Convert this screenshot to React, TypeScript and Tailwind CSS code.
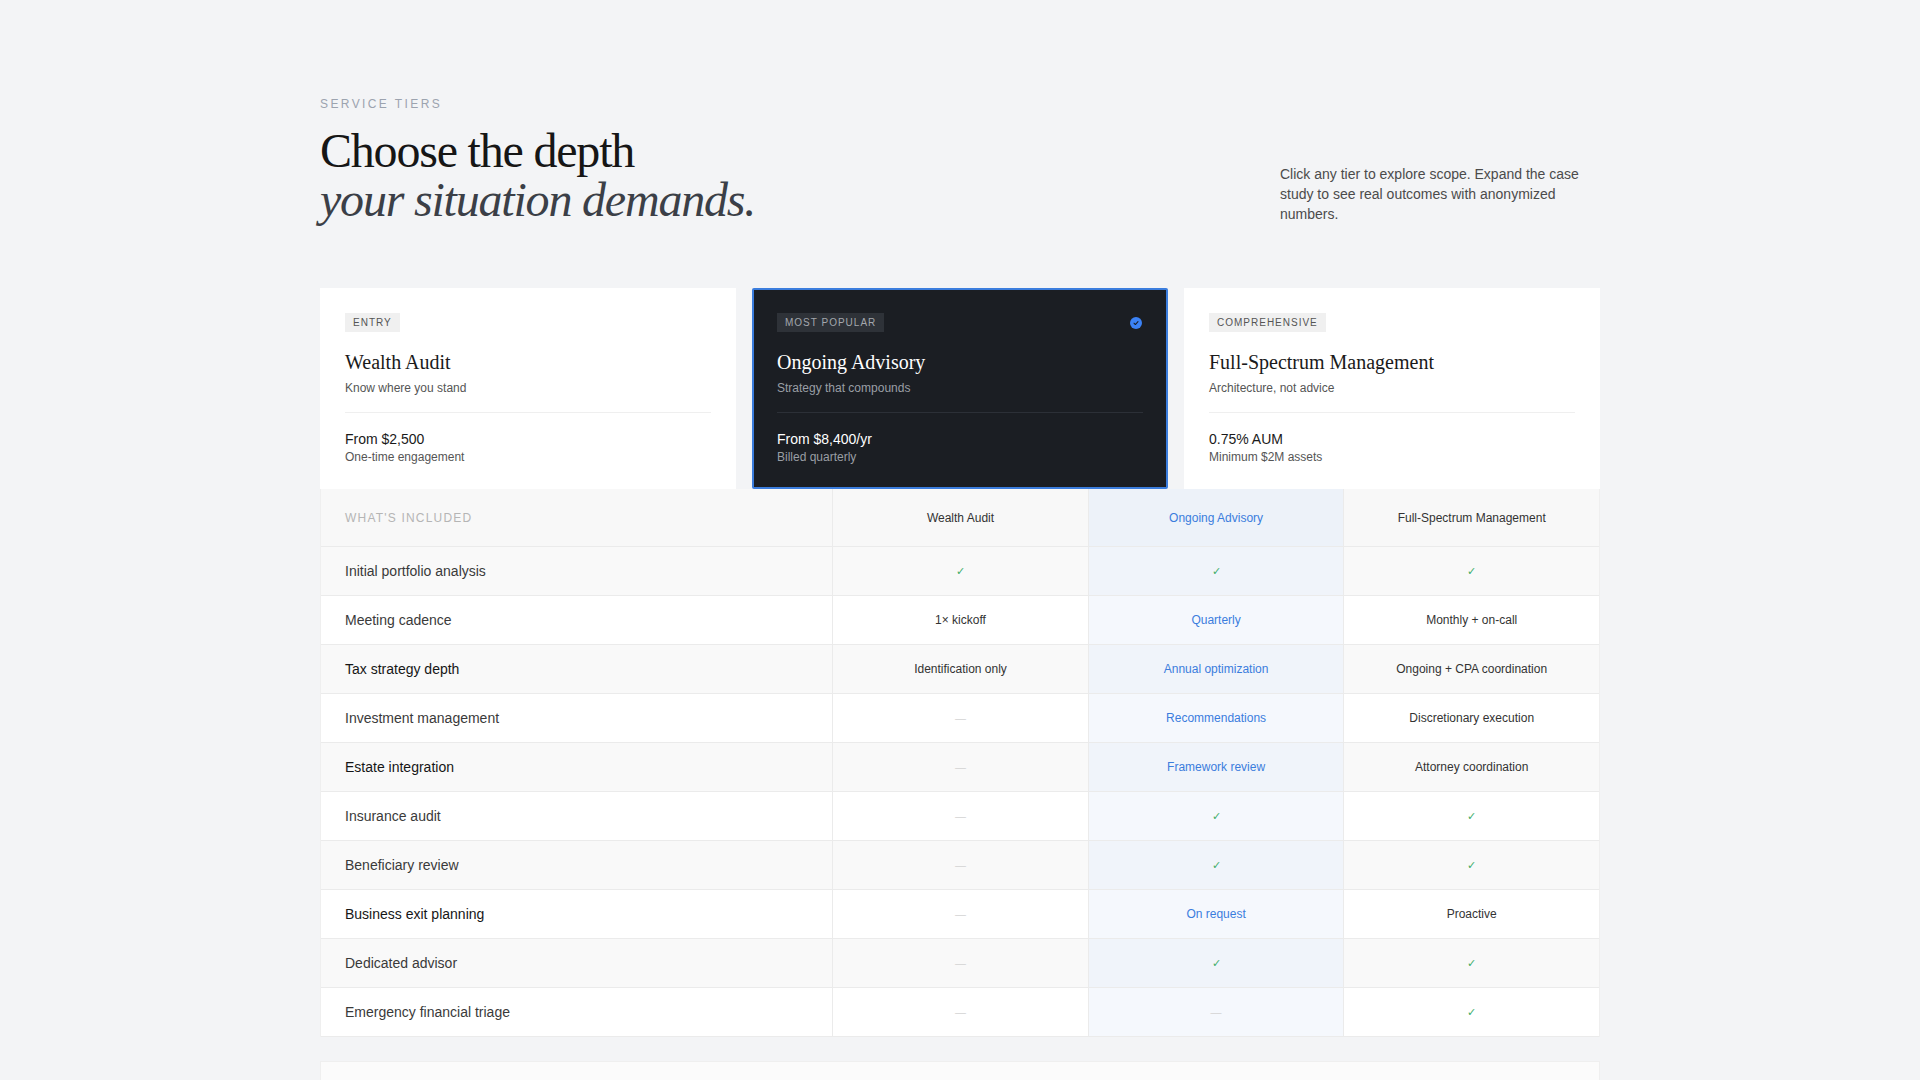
import React from "react";

type Cell = string;
type Row = { label: string; dark?: boolean; v: Cell[] };

const rows: Row[] = [
  { label: "Initial portfolio analysis", v: ["check", "check", "check"] },
  { label: "Meeting cadence", v: ["1× kickoff", "Quarterly", "Monthly + on-call"] },
  { label: "Tax strategy depth", dark: true, v: ["Identification only", "Annual optimization", "Ongoing + CPA coordination"] },
  { label: "Investment management", v: ["dash", "Recommendations", "Discretionary execution"] },
  { label: "Estate integration", dark: true, v: ["dash", "Framework review", "Attorney coordination"] },
  { label: "Insurance audit", v: ["dash", "check", "check"] },
  { label: "Beneficiary review", v: ["dash", "check", "check"] },
  { label: "Business exit planning", dark: true, v: ["dash", "On request", "Proactive"] },
  { label: "Dedicated advisor", v: ["dash", "check", "check"] },
  { label: "Emergency financial triage", v: ["dash", "dash", "check"] },
];

function CellContent({ value, hl }: { value: string; hl: boolean }) {
  if (value === "check") return <span className="text-[11px] text-[#3fae6a]">✓</span>;
  if (value === "dash") return <span className="text-[11px] text-[#d4d4d4]">—</span>;
  return <span className={hl ? "text-[#3b7ddd]" : "text-[#333333]"}>{value}</span>;
}

type Tier = { badge: string; title: string; sub: string; price: string; note: string; active?: boolean };
const tiers: Tier[] = [
  { badge: "Entry", title: "Wealth Audit", sub: "Know where you stand", price: "From $2,500", note: "One-time engagement" },
  { badge: "Most Popular", title: "Ongoing Advisory", sub: "Strategy that compounds", price: "From $8,400/yr", note: "Billed quarterly", active: true },
  { badge: "Comprehensive", title: "Full-Spectrum Management", sub: "Architecture, not advice", price: "0.75% AUM", note: "Minimum $2M assets" },
];

function TierCard({ t }: { t: Tier }) {
  const a = !!t.active;
  return (
    <div
      className={
        a
          ? "border-2 border-[#3b7ddd] bg-[#1b1e23] px-[23px] pt-[23px] pb-[22px] rounded-[2px]"
          : "border-2 border-white bg-white px-[23px] pt-[23px] pb-[22px]"
      }
    >
      <div className="flex items-center justify-between">
        <span
          className={
            a
              ? "bg-[#2e3238] px-2 py-0.5 text-[10px] leading-[15px] uppercase tracking-[0.1em] text-[#a3a7ad]"
              : "bg-[#f0f0f0] px-2 py-0.5 text-[10px] leading-[15px] uppercase tracking-[0.1em] text-[#555555]"
          }
        >
          {t.badge}
        </span>
        {a && (
          <span className="mr-px flex h-3 w-3 items-center justify-center rounded-full bg-[#3b82f6]">
            <svg viewBox="0 0 12 12" className="h-2 w-2" fill="none">
              <path d="M3 6.3l2 2 4-4.3" stroke="#1b1e23" strokeWidth="1.6" strokeLinecap="round" strokeLinejoin="round" />
            </svg>
          </span>
        )}
      </div>
      <div
        className={(a ? "text-white" : "text-[#1a1a1a]") + " mt-4 text-[20px] leading-7"}
        style={{ fontFamily: '"Liberation Serif", serif' }}
      >
        {t.title}
      </div>
      <div className={(a ? "text-[#9a9ea5]" : "text-[#555555]") + " mt-1 text-[12px] leading-4"}>{t.sub}</div>
      <div className={(a ? "border-[#2c3037]" : "border-[#efefef]") + " mt-4 border-t pt-4"}>
        <div className={(a ? "text-white" : "text-[#1a1a1a]") + " text-[14px] leading-5"}>{t.price}</div>
        <div className={(a ? "text-[#9a9ea5]" : "text-[#555555]") + " text-[12px] leading-4"}>{t.note}</div>
      </div>
    </div>
  );
}

export default function App() {
  return (
    <div
      className="min-h-screen bg-[#f3f4f6] text-[#333333]"
      style={{ fontFamily: '"Liberation Sans", Arial, sans-serif' }}
    >
      <div className="mx-auto w-[1280px] pt-24 pb-24">
        <div className="flex items-end justify-between">
          <div>
            <div className="text-[12px] leading-4 uppercase tracking-[0.2em] text-[#9ca3af]">Service Tiers</div>
            <h1
              className="mt-3.5 text-[48px] leading-[49px] tracking-[-0.025em] text-[#161616]"
              style={{ fontFamily: '"Liberation Serif", serif' }}
            >
              Choose the depth
              <br />
              <em className="text-[#3b3f47]">your situation demands.</em>
            </h1>
          </div>
          <p className="w-[320px] text-[14px] leading-5 text-[#4b4b4b]">
            Click any tier to explore scope. Expand the case study to see real outcomes with anonymized numbers.
          </p>
        </div>

        <div className="mt-16 grid grid-cols-3 gap-4">
          {tiers.map((t) => (
            <TierCard key={t.title} t={t} />
          ))}
        </div>

        <div className="border-x border-[#efefef]">
          <div className="grid h-[58px] grid-cols-[2fr_1fr_1fr_1fr] border-b border-[#ebebeb] bg-[#f8f8f8] text-[12px]">
            <div className="flex items-center pl-6 uppercase tracking-[0.1em] text-[#b5b5b5]">What's included</div>
            <div className="flex items-center justify-center border-l border-[#ebebeb] text-[#333333]">Wealth Audit</div>
            <div className="flex items-center justify-center border-l border-[#ebebeb] bg-[#edf2f9] text-[#3b7ddd]">Ongoing Advisory</div>
            <div className="flex items-center justify-center border-l border-[#ebebeb] text-[#333333]">Full-Spectrum Management</div>
          </div>
          {rows.map((r, i) => {
            const odd = i % 2 === 0;
            return (
              <div
                key={r.label}
                className={
                  (odd ? "bg-[#f9f9f9]" : "bg-white") +
                  " grid h-[49px] grid-cols-[2fr_1fr_1fr_1fr] border-b border-[#ebebeb] text-[12px]"
                }
              >
                <div className={(r.dark ? "text-[#161616]" : "text-[#3a3a3a]") + " flex items-center pl-6 text-[14px]"}>
                  {r.label}
                </div>
                {r.v.map((v, j) => (
                  <div
                    key={j}
                    className={
                      "flex items-center justify-center border-l border-[#ebebeb] " +
                      (j === 1 ? (odd ? "bg-[#f0f4fa]" : "bg-[#f5f8fd]") : "")
                    }
                  >
                    <CellContent value={v} hl={j === 1} />
                  </div>
                ))}
              </div>
            );
          })}
        </div>

        <div className="mt-6 border border-[#efefef] bg-[#fbfbfb] px-6 py-6">
          <div className="text-[12px] uppercase tracking-[0.1em] text-[#9ca3af]">Case study</div>
          <div className="mt-2 text-[20px] text-[#1a1a1a]" style={{ fontFamily: '"Liberation Serif", serif' }}>
            How a founder restructured after a liquidity event
          </div>
        </div>
      </div>
    </div>
  );
}
